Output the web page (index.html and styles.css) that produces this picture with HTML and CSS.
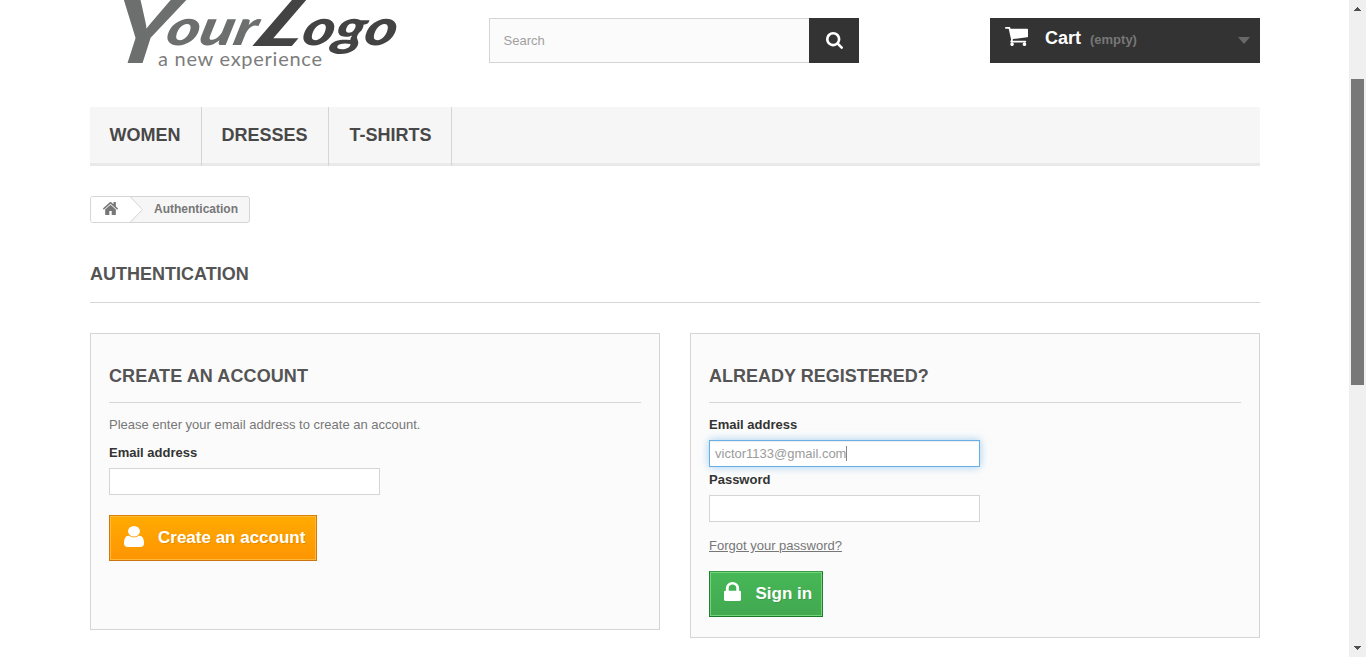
FILE: index.html
```html
<!DOCTYPE html>
<html lang="en">
<head>
<meta charset="utf-8">
<title>Login - My Store</title>
<link rel="stylesheet" href="styles.css">
</head>
<body>
<div class="page">
  <div class="container">
    <header class="header">
      <svg class="logo" width="310" height="80" viewBox="100 0 310 80" role="img" aria-label="Your Logo">
        <g class="logo-word">
          <text class="logo-your" transform="translate(107 63) skewX(-10)" font-size="90" textLength="64" lengthAdjust="spacingAndGlyphs">Y</text>
          <text class="logo-your" transform="translate(164 45) skewX(-14)" textLength="90" lengthAdjust="spacingAndGlyphs">our</text>
          <text class="logo-dark" transform="translate(249 46) skewX(-34)" font-size="66" textLength="48" lengthAdjust="spacingAndGlyphs">L</text>
          <text class="logo-dark" transform="translate(300 45) skewX(-14)" textLength="94" lengthAdjust="spacingAndGlyphs">ogo</text>
        </g>
        <text class="logo-tag" x="158" y="66" textLength="164">a new experience</text>
      </svg>
      <form class="search">
        <span class="search-field">Search</span>
        <span class="search-button"><svg width="17" height="17" viewBox="64 128 1664 1664"><path d="M1216 832q0-185-131.500-316.500t-316.500-131.500-316.500 131.500-131.500 316.500 131.500 316.500 316.500 131.500 316.500-131.500 131.500-316.500zm512 832q0 52-38 90t-90 38q-54 0-90-38l-343-342q-179 124-399 124-143 0-273.500-55.500t-225-150-150-225-55.500-273.500 55.500-273.500 150-225 225-150 273.500-55.500 273.500 55.500 225 150 150 225 55.500 273.500q0 220-124 399l343 343q37 37 37 90z"/></svg></span>
      </form>
      <div class="cart">
        <svg class="cart-icon" width="23" height="19" viewBox="64 256 1664 1408" preserveAspectRatio="none"><path d="M704 1536q0 52-38 90t-90 38-90-38-38-90 38-90 90-38 90 38 38 90zm896 0q0 52-38 90t-90 38-90-38-38-90 38-90 90-38 90 38 38 90zm128-1088v512q0 24-16.500 42.500t-40.500 21.500l-1044 122q13 60 13 70 0 16-24 64h920q26 0 45 19t19 45-19 45-45 19h-1024q-26 0-45-19t-19-45q0-11 8-31.500t16-36 21.500-40 15.500-29.500l-177-823h-204q-26 0-45-19t-19-45 19-45 45-19h256q16 0 28.500 6.500t19.500 15.500 13 24.500 8 26 5.500 29.500 4.500 26h1201q26 0 45 19t19 45z"/></svg>
        <b class="cart-label">Cart</b>
        <span class="cart-empty">(empty)</span>
        <svg class="cart-caret" width="12" height="7" viewBox="0 0 12 7"><path d="M0 0h12L6.500 6.500h-1z"/></svg>
      </div>
    </header>

    <nav class="menu">
      <a class="menu-item women">WOMEN</a>
      <a class="menu-item dresses">DRESSES</a>
      <a class="menu-item shirts">T-SHIRTS</a>
    </nav>

    <div class="breadcrumb">
      <span class="home"><svg width="15" height="13" viewBox="89 250 1614 1286" preserveAspectRatio="none"><path d="M1472 992v480q0 26-19 45t-45 19h-384v-384h-256v384h-384q-26 0-45-19t-19-45v-480q0-1 .5-3t.5-3l575-474 575 474q1 2 1 6zm223-69l-62 74q-8 9-21 11h-3q-13 0-21-7l-692-577-692 577q-12 8-24 7-13-2-21-11l-62-74q-8-10-7-23.500t11-21.500l719-599q32-26 76-26t76 26l244 204v-195q0-14 9-23t23-9h192q14 0 23 9t9 23v408l219 182q10 8 11 21.500t-7 23.500z"/></svg></span>
      <svg class="crumb-arrow" width="14" height="25" viewBox="0 0 14 25"><path class="arrow-fill" d="M0 0L13 12.500 0 25z"/><path class="arrow-line" d="M.5 0L12.500 12.500 .5 25"/></svg>
      <span class="crumb">Authentication</span>
    </div>

    <h1 class="page-heading">AUTHENTICATION</h1>

    <main class="columns">
      <section class="box box-create">
        <h2 class="subheading create-title">CREATE AN ACCOUNT</h2>
        <p class="hint">Please enter your email address to create an account.</p>
        <label class="label">Email address</label>
        <div class="input"></div>
        <a class="button button-create">
          <svg width="20" height="21" viewBox="256 128 1280 1536" preserveAspectRatio="none"><path d="M1536 1399q0 109-62.500 187t-150.500 78h-854q-88 0-150.500-78t-62.500-187q0-85 8.500-160.500t31.500-152 58.500-131 94-89 134.500-34.500q131 128 313 128t313-128q76 0 134.500 34.500t94 89 58.500 131 31.500 152 8.500 160.500zm-256-887q0 159-112.500 271.500t-271.500 112.500-271.500-112.500-112.500-271.500 112.500-271.500 271.500-112.500 271.500 112.500 112.500 271.500z"/></svg>
          <span>Create an account</span>
        </a>
      </section>
      <section class="box box-login">
        <h2 class="subheading">ALREADY REGISTERED?</h2>
        <label class="label">Email address</label>
        <div class="input focused">victor1133@gmail.com<i class="text-cursor"></i></div>
        <label class="label">Password</label>
        <div class="input"></div>
        <a class="forgot">Forgot your password?</a>
        <a class="button button-login">
          <svg width="17" height="19" viewBox="320 128 1152 1408" preserveAspectRatio="none"><path d="M640 768h512v-192q0-106-75-181t-181-75-181 75-75 181v192zm832 96v576q0 40-28 68t-68 28h-960q-40 0-68-28t-28-68v-576q0-40 28-68t68-28h32v-192q0-184 132-316t316-132 316 132 132 316v192h32q40 0 68 28t28 68z"/></svg>
          <span>Sign in</span>
        </a>
      </section>
    </main>
  </div>
</div>
<aside class="scrollbar">
  <svg width="7" height="4" viewBox="0 0 7 4" shape-rendering="crispEdges"><path d="M3 0h1v1h1v1h1v1h1v1H0V3h1V2h1V1h1z"/></svg>
  <div class="thumb"></div>
  <svg class="down" width="7" height="4" viewBox="0 0 7 4" shape-rendering="crispEdges"><path d="M0 0h7v1H6v1H5v1H4v1H3V3H2V2H1V1H0z"/></svg>
</aside>
</body>
</html>
```
FILE: styles.css
```css
* { box-sizing: border-box; }
body {
  margin: 0;
  display: flex;
  height: 657px;
  overflow: hidden;
  background: #fff;
  color: #777;
  font: 13px/18px "Liberation Sans", Arial, sans-serif;
}
svg { display: block; flex: none; }
.page { flex: 1; padding-left: 90px; }
.container { width: 1170px; }

.header { display: flex; height: 107px; }
.logo { margin-left: 10px; overflow: visible; }
.logo-word { font: italic 900 50px Lato, sans-serif; }
.logo-your { fill: #6d6f6e; }
.logo-dark { fill: #434343; }
.logo-tag { font: 400 20px Lato, sans-serif; fill: #7d7d7d; }
.search { display: flex; width: 370px; height: 45px; margin: 18px 0 0 79px; }
.search-field {
  width: 320px;
  padding: 13px 13.5px;
  border: 1px solid #d6d4d4;
  border-right: 0;
  background: #fbfbfb;
  color: #a0a0a0;
}
.search-button {
  display: flex;
  width: 50px;
  align-items: center;
  justify-content: center;
  background: #333;
  fill: #fff;
}
.cart {
  display: flex;
  width: 270px;
  height: 45px;
  margin: 18px 0 0 131px;
  padding: 0 10px 0 15px;
  background: #333;
  fill: #fff;
}
.cart-icon { margin-top: 9px; }
.cart-label { margin: 11px 8px 0 17px; color: #fff; font-size: 18px; width: 37px; }
.cart-empty { margin-top: 13px; color: #777; font-weight: bold; }
.cart-caret { margin: 19px 0 0 auto; fill: #686868; }

.menu { display: flex; height: 59px; background: #f6f6f6; border-bottom: 3px solid #e9e9e9; }
.menu-item {
  height: 59px;
  padding: 17px 0 0 19.5px;
  border-right: 1px solid #d6d4d4;
  color: #484848;
  font: bold 18px/22px "Liberation Sans", Arial, sans-serif;
}
.women { width: 112px; }
.dresses { width: 127px; }
.shirts { width: 123px; padding-left: 20.5px; }

.breadcrumb {
  display: flex;
  width: 160px;
  height: 27px;
  margin-top: 30px;
  border: 1px solid #d6d4d4;
  border-radius: 3px;
  background: #f6f6f6;
  overflow: hidden;
}
.home { width: 39px; padding: 5px 0 0 11.500px; background: #fff; fill: #777; }
.arrow-fill { fill: #fff; }
.arrow-line { fill: none; stroke: #d6d4d4; }
.crumb { margin-left: 10px; font-size: 12px; line-height: 24px; font-weight: bold; }

.page-heading {
  height: 41px;
  margin: 39px 0 30px;
  border-bottom: 1px solid #d6d4d4;
  color: #555454;
  font-size: 18px;
  line-height: 24px;
}
.columns { display: flex; align-items: flex-start; gap: 30px; }
.box { width: 570px; padding: 30px 18px 0; border: 1px solid #d6d4d4; background: #fbfbfb; }
.box-create { height: 297px; }
.box-login { height: 305px; }
.subheading {
  height: 39px;
  margin: 0 0 13px;
  border-bottom: 1px solid #d6d4d4;
  color: #555454;
  font-size: 18px;
  line-height: 24px;
}
.create-title { letter-spacing: .1px; }
.hint { margin: 0 0 10px; }
.label { display: block; color: #333; font-weight: bold; margin-bottom: 6px; }
.input {
  display: flex;
  width: 271px;
  height: 27px;
  padding: 4px 5px;
  border: 1px solid #d6d4d4;
  background: #fff;
  color: #9c9b9b;
}
.focused {
  margin-bottom: 4px;
  border-color: #66afe9;
  box-shadow: inset 0 1px 1px rgba(0,0,0,.075), 0 0 8px rgba(102,175,233,.6);
}
.text-cursor { width: 1px; height: 15px; margin-top: 1px; background: #888; }
.button {
  display: flex;
  height: 46px;
  border: 1px solid;
  color: #fff;
  fill: #fff;
  font: bold 17px/21px "Liberation Sans", Arial, sans-serif;
  text-shadow: 1px 1px rgba(0,0,0,.12);
  white-space: nowrap;
}
.button-create {
  width: 208px;
  margin-top: 20px;
  padding: 10px 0 0 14px;
  gap: 14px;
  border-color: #d98305 #cf7a0b #cc7412;
  background: linear-gradient(#ffab02, #fe9502);
  box-shadow: inset 0 0 0 1px #ffb93a;
}
.button-create span, .button-login span { margin-top: 1px; }
.forgot { display: block; margin: 15px 0 16px; text-decoration: underline; }
.button-login {
  width: 114px;
  padding: 10px 0 0 14px;
  gap: 14.5px;
  border-color: #399a49 #247f32 #1a7a29;
  background: linear-gradient(#46b856, #42a851);
  box-shadow: inset 0 0 0 1px #74d578;
}

.scrollbar { width: 17px; height: 657px; padding: 7px 2px 0; background: #f0f0f0; fill: #505050; }
.scrollbar svg { margin-left: 3px; }
.thumb { width: 13px; height: 306px; margin-top: 68px; background: #787878; }
.scrollbar .down { margin-top: 261px; }
```
